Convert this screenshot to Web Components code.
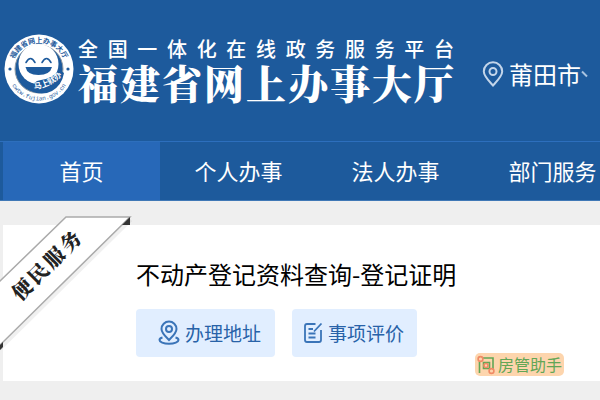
<!DOCTYPE html>
<html lang="zh-CN">
<head>
<meta charset="utf-8">
<meta name="viewport" content="width=device-width, initial-scale=1">
<title>福建省网上办事大厅</title>
<style>
  body {
    margin: 0;
    background: #efefef;
    color: #000;
    font-family: "Noto Sans CJK SC", sans-serif;
    overflow-x: hidden;
  }
</style>
</head>
<body>
<fj-header>
  <fj-brand></fj-brand>
  <fj-city name="莆田市"></fj-city>
</fj-header>
<fj-nav>
  <fj-nav-item active>首页</fj-nav-item>
  <fj-nav-item>个人办事</fj-nav-item>
  <fj-nav-item>法人办事</fj-nav-item>
  <fj-nav-item>部门服务</fj-nav-item>
</fj-nav>
<fj-service-card ribbon="便民服务">
  <span slot="title">不动产登记资料查询-登记证明</span>
  <fj-action icon="address">办理地址</fj-action>
  <fj-action icon="review">事项评价</fj-action>
  <fj-helper-badge slot="badge">房管助手</fj-helper-badge>
</fj-service-card>

<script>
class FjElement extends HTMLElement {
  constructor() {
    super();
    this.attachShadow({ mode: 'open' });
  }

  connectedCallback() {
    this.shadowRoot.innerHTML = this.render();
  }
}

class FjHeader extends FjElement {
  render() {
    return `
      <style>
        :host { display: block; background: #1d5a9c; color: #fff; }
        header {
          display: flex;
          align-items: flex-start;
          gap: 28px;
          padding: 34px 0 36px 4px;
          border-bottom: 1px solid #2d6fbd;
        }
      </style>
      <header><slot></slot></header>
    `;
  }
}

class FjBrand extends FjElement {
  render() {
    return `
      <style>
        :host { display: flex; gap: 4px; flex: none; }
        svg { width: 70px; height: 70px; flex: none; }
        .names { display: flex; flex-direction: column; width: 376px; }
        .platform {
          font-size: 20px;
          font-weight: 500;
          line-height: 29px;
          text-align-last: justify;
          white-space: nowrap;
        }
        h1 {
          margin: 0;
          padding-bottom: 4px;
          font-family: "Noto Serif CJK SC", "Noto Sans CJK SC", serif;
          font-size: 40px;
          font-weight: 900;
          line-height: 38px;
          text-align-last: justify;
          white-space: nowrap;
        }
      </style>
      <svg viewBox="0 0 70 70" aria-hidden="true">
        <defs>
          <path id="top" d="M9 43 A27 27 0 1 1 61 43"/>
          <path id="bottom" d="M3.500 35 A31.500 31.500 0 0 0 66.500 35"/>
          <path id="motto" d="M26 55 Q46 56 61 38"/>
        </defs>
        <circle cx="35" cy="35" r="34.500" fill="#fff"/>
        <circle cx="35" cy="35" r="24" fill="#1d5a9c" stroke="#8f9aa3" stroke-width="1"/>
        <circle cx="34.500" cy="30" r="20" fill="#fff"/>
        <path d="M27 57q1-10 10-11 10-1 19-10l4 3q-2 12-12 18-10 5-21 0z" fill="#1d5a9c"/>
        <path d="M22 28.500q4.500-8 9 0M38 28.500q4.500-8 9 0" fill="none" stroke="#1d5a9c" stroke-width="1.600" stroke-linecap="round"/>
        <path d="M21.500 33H48q-2 8-13.500 8T21.500 33z" fill="#1d5a9c"/>
        <circle cx="6" cy="35" r="1.600" fill="#1d5a9c"/>
        <circle cx="64" cy="35" r="1.600" fill="#1d5a9c"/>
        <text font-size="7" font-weight="700" fill="#1d5a9c"><textPath href="#top" startOffset="50%" text-anchor="middle">福建省网上办事大厅</textPath></text>
        <text font-size="6" fill="#1d5a9c" font-family="Liberation Mono, monospace"><textPath href="#bottom" startOffset="50%" text-anchor="middle">cwtw.fujian.gov.cn</textPath></text>
        <text font-size="8" font-weight="700" fill="#fff"><textPath href="#motto" startOffset="50%" text-anchor="middle">马上就办</textPath></text>
      </svg>
      <div class="names">
        <div class="platform">全国一体化在线政务服务平台</div>
        <h1>福建省网上办事大厅</h1>
      </div>
    `;
  }
}

class FjCity extends FjElement {
  render() {
    return `
      <style>
        :host { display: block; flex: none; padding-top: 24px; }
        button {
          display: flex;
          align-items: center;
          gap: 5px;
          padding: 0;
          border: 0;
          background: none;
          color: #fff;
          font: 24px/32px "Noto Sans CJK SC", sans-serif;
          cursor: pointer;
        }
        svg { display: block; }
        .label { display: flex; align-items: center; }
      </style>
      <button type="button">
        <svg width="22" height="26" viewBox="0 0 22 26" fill="none" stroke="#c3d5ea" stroke-width="2">
          <path d="M11 24.500C6 19 1.800 15 1.800 10.500a9.200 9.200 0 0 1 18.400 0C20.200 15 16 19 11 24.500z"/>
          <circle cx="11" cy="10.500" r="3.500"/>
        </svg>
        <span class="label">${this.getAttribute('name')}
          <svg width="8" height="8" viewBox="0 0 8 8" fill="none" stroke="#a9c3e0" stroke-width="2"><path d="M1 1.500l5 5"/></svg>
        </span>
      </button>
    `;
  }
}

class FjNav extends FjElement {
  render() {
    return `
      <style>
        :host { display: block; background: #1d5a9c; border-bottom: 1px solid #3f78b6; }
        nav { display: flex; padding-left: 3px; overflow: hidden; }
      </style>
      <nav><slot></slot></nav>
    `;
  }
}

class FjNavItem extends FjElement {
  render() {
    return `
      <style>
        :host { display: block; flex: 0 0 157px; }
        a {
          display: block;
          padding-bottom: 2px;
          color: #fff;
          font-size: 22px;
          line-height: 56px;
          text-align: center;
          text-decoration: none;
        }
        :host([active]) a { background: #2768b8; }
        a:hover { background: #2768b8; }
      </style>
      <a href="#"><slot></slot></a>
    `;
  }
}

class FjServiceCard extends FjElement {
  render() {
    return `
      <style>
        :host { display: block; padding: 24px 0 19px 3px; }
        section {
          position: relative;
          padding: 32px 36px 5px 133px;
          background: #fff;
        }
        h2 {
          margin: 0;
          font-size: 24px;
          font-weight: 400;
          line-height: 34px;
        }
        .actions { display: flex; gap: 17px; padding-top: 18px; }
        .badge { display: flex; justify-content: flex-end; margin-top: -4px; }
        .ribbon {
          position: absolute;
          left: -3px;
          top: -9px;
          width: 132px;
          height: 136px;
        }
        .ribbon svg { display: block; }
        .ribbon span {
          position: absolute;
          left: 2px;
          top: 34px;
          width: 88px;
          font-family: "Noto Serif CJK SC", "Noto Sans CJK SC", serif;
          font-size: 20px;
          font-weight: 900;
          line-height: 30px;
          color: #222;
          text-align-last: justify;
          white-space: nowrap;
          transform: rotate(-45deg);
        }
      </style>
      <section>
        <h2><slot name="title"></slot></h2>
        <div class="actions"><slot></slot></div>
        <div class="badge"><slot name="badge"></slot></div>
        <div class="ribbon">
          <svg width="132" height="136" viewBox="0 0 132 136">
            <path d="M-1 132L130 3" stroke="#000" stroke-opacity=".06" stroke-width="6"/>
            <path d="M-2 67L66 1h64L-2 131z" fill="#fff" stroke="#aaa" stroke-width="1.500"/>
            <path d="M130 1v8h-8zM0 134v-5l3-3v5z" fill="#333"/>
          </svg>
          <span>${this.getAttribute('ribbon')}</span>
        </div>
      </section>
    `;
  }
}

const ACTION_ICONS = {
  address: `
    <svg width="22" height="26" viewBox="0 0 22 26" fill="none" stroke="#3a74b8" stroke-width="2">
      <path d="M11 20C7 16 3.500 13 3.500 9a7.500 7.500 0 0 1 15 0c0 4-3.500 7-7.500 11z"/>
      <circle cx="11" cy="9" r="3"/>
      <path d="M4.500 17.500C2.500 18 1.500 19 1.500 20c0 2 4 3.800 9.500 3.800s9.500-1.800 9.500-3.800c0-1-1-2-3-2.500"/>
    </svg>`,
  review: `
    <svg width="20" height="22" viewBox="0 0 20 22" fill="none" stroke="#3a74b8" stroke-width="1.800">
      <path d="M12.500 2H4Q2 2 2 4v14q0 2 2 2h12q2 0 2-2V8"/>
      <path d="M18.500 1.500L11 9.500M5.500 7H10M5.500 11.500h7M5.500 15.500h7"/>
    </svg>`
};

class FjAction extends FjElement {
  render() {
    const icon = this.getAttribute('icon');
    const pad = icon === 'address' ? '0 14px 0 22px' : '0 13px 0 11px';
    return `
      <style>
        :host { display: block; }
        button {
          display: flex;
          align-items: center;
          gap: 5px;
          padding: ${pad};
          border: 0;
          border-radius: 4px;
          background: #e1eeff;
          color: #2862a8;
          font: 19px/48px "Noto Sans CJK SC", sans-serif;
          cursor: pointer;
        }
        svg { display: block; }
      </style>
      <button type="button">${ACTION_ICONS[icon]}<span><slot></slot></span></button>
    `;
  }
}

class FjHelperBadge extends FjElement {
  render() {
    return `
      <style>
        :host {
          display: flex;
          align-items: center;
          gap: 3px;
          padding: 0 2px;
          border-radius: 5px;
          background: #fdd5ad;
          color: #62a656;
          font-size: 16px;
          line-height: 23px;
        }
        svg { display: block; }
      </style>
      <svg width="18" height="20" viewBox="0 0 18 20" fill="none" stroke-width="1.600">
        <path d="M2.500 7v11M6 3h10v11" stroke="#62a656"/>
        <path d="M6.500 7.500h6v6h-6z" stroke="#62a656"/>
        <g stroke="#f08a65"><circle cx="3.500" cy="4" r="2.400"/><circle cx="9" cy="10.500" r="2"/><circle cx="14.500" cy="16" r="2.400"/></g>
      </svg>
      <span><slot></slot></span>
    `;
  }
}

customElements.define('fj-header', FjHeader);
customElements.define('fj-brand', FjBrand);
customElements.define('fj-city', FjCity);
customElements.define('fj-nav', FjNav);
customElements.define('fj-nav-item', FjNavItem);
customElements.define('fj-service-card', FjServiceCard);
customElements.define('fj-action', FjAction);
customElements.define('fj-helper-badge', FjHelperBadge);
</script>
</body>
</html>
